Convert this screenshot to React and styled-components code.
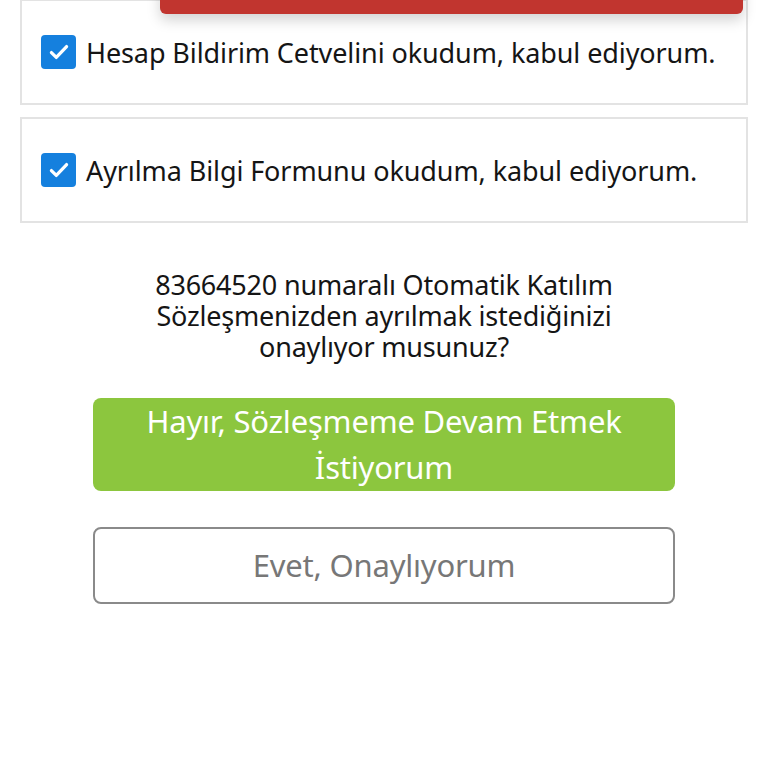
import React from 'react';
import styled, { createGlobalStyle } from 'styled-components';

const Global = createGlobalStyle`
  html, body {
    margin: 0;
    padding: 0;
    background: #fff;
    font-family: "Noto Sans", "DejaVu Sans", sans-serif;
  }
`;

const Page = styled.div`
  position: relative;
  width: 768px;
  height: 768px;
  overflow: hidden;
  background: #fff;
`;

const Toast = styled.div`
  position: absolute;
  top: -30px;
  left: 160px;
  width: 583px;
  height: 44px;
  background: #c1352f;
  border-radius: 6px;
  box-shadow: 0 6px 14px rgba(0, 0, 0, 0.18);
  z-index: 2;
`;

const Cards = styled.div`
  display: flex;
  flex-direction: column;
  gap: 12px;
  margin: -1px 20px 0 20px;
`;

const Card = styled.label`
  display: flex;
  align-items: center;
  gap: 10px;
  height: 102px;
  padding: 0 19px;
  border: 2px solid #e3e3e3;
  color: #151515;
  font-size: 27px;
  letter-spacing: -0.1px;
`;

const Box = styled.span`
  flex: none;
  width: 35px;
  height: 34px;
  border-radius: 4px;
  background: #1580de;
  display: flex;
  align-items: center;
  justify-content: center;
`;

const Question = styled.p`
  margin: 46px auto 0;
  width: 480px;
  text-align: center;
  font-size: 27px;
  line-height: 31px;
  color: #151515;
  letter-spacing: -0.2px;
`;

const Actions = styled.div`
  display: flex;
  flex-direction: column;
  gap: 36px;
  margin: 36px 93px 0;
`;

const Button = styled.button`
  width: 100%;
  border-radius: 8px;
  font-family: inherit;
  font-size: 31px;
  letter-spacing: -0.2px;
  line-height: 46px;
  text-align: center;
  background: ${p => (p.$primary ? '#8cc63e' : '#fff')};
  color: ${p => (p.$primary ? '#fff' : '#777')};
  border: ${p => (p.$primary ? 'none' : '2px solid #8a8a8a')};
  padding: ${p => (p.$primary ? '0 30px 1px' : '13px 20px 14px')};
`;

const Check = () => (
  <Box>
    <svg width="26" height="26" viewBox="0 0 24 24" fill="none">
      <path d="M5 12.5l4.5 4.5 9.5-10" stroke="#fff" strokeWidth="3" strokeLinecap="round" strokeLinejoin="round" />
    </svg>
  </Box>
);

export default function App() {
  return (
    <Page>
      <Global />
      <Toast />
      <Cards>
        <Card><Check />Hesap Bildirim Cetvelini okudum, kabul ediyorum.</Card>
        <Card><Check />Ayrılma Bilgi Formunu okudum, kabul ediyorum.</Card>
      </Cards>
      <Question>
        83664520 numaralı Otomatik Katılım Sözleşmenizden ayrılmak istediğinizi onaylıyor musunuz?
      </Question>
      <Actions>
        <Button $primary>Hayır, Sözleşmeme Devam Etmek İstiyorum</Button>
        <Button>Evet, Onaylıyorum</Button>
      </Actions>
    </Page>
  );
}
